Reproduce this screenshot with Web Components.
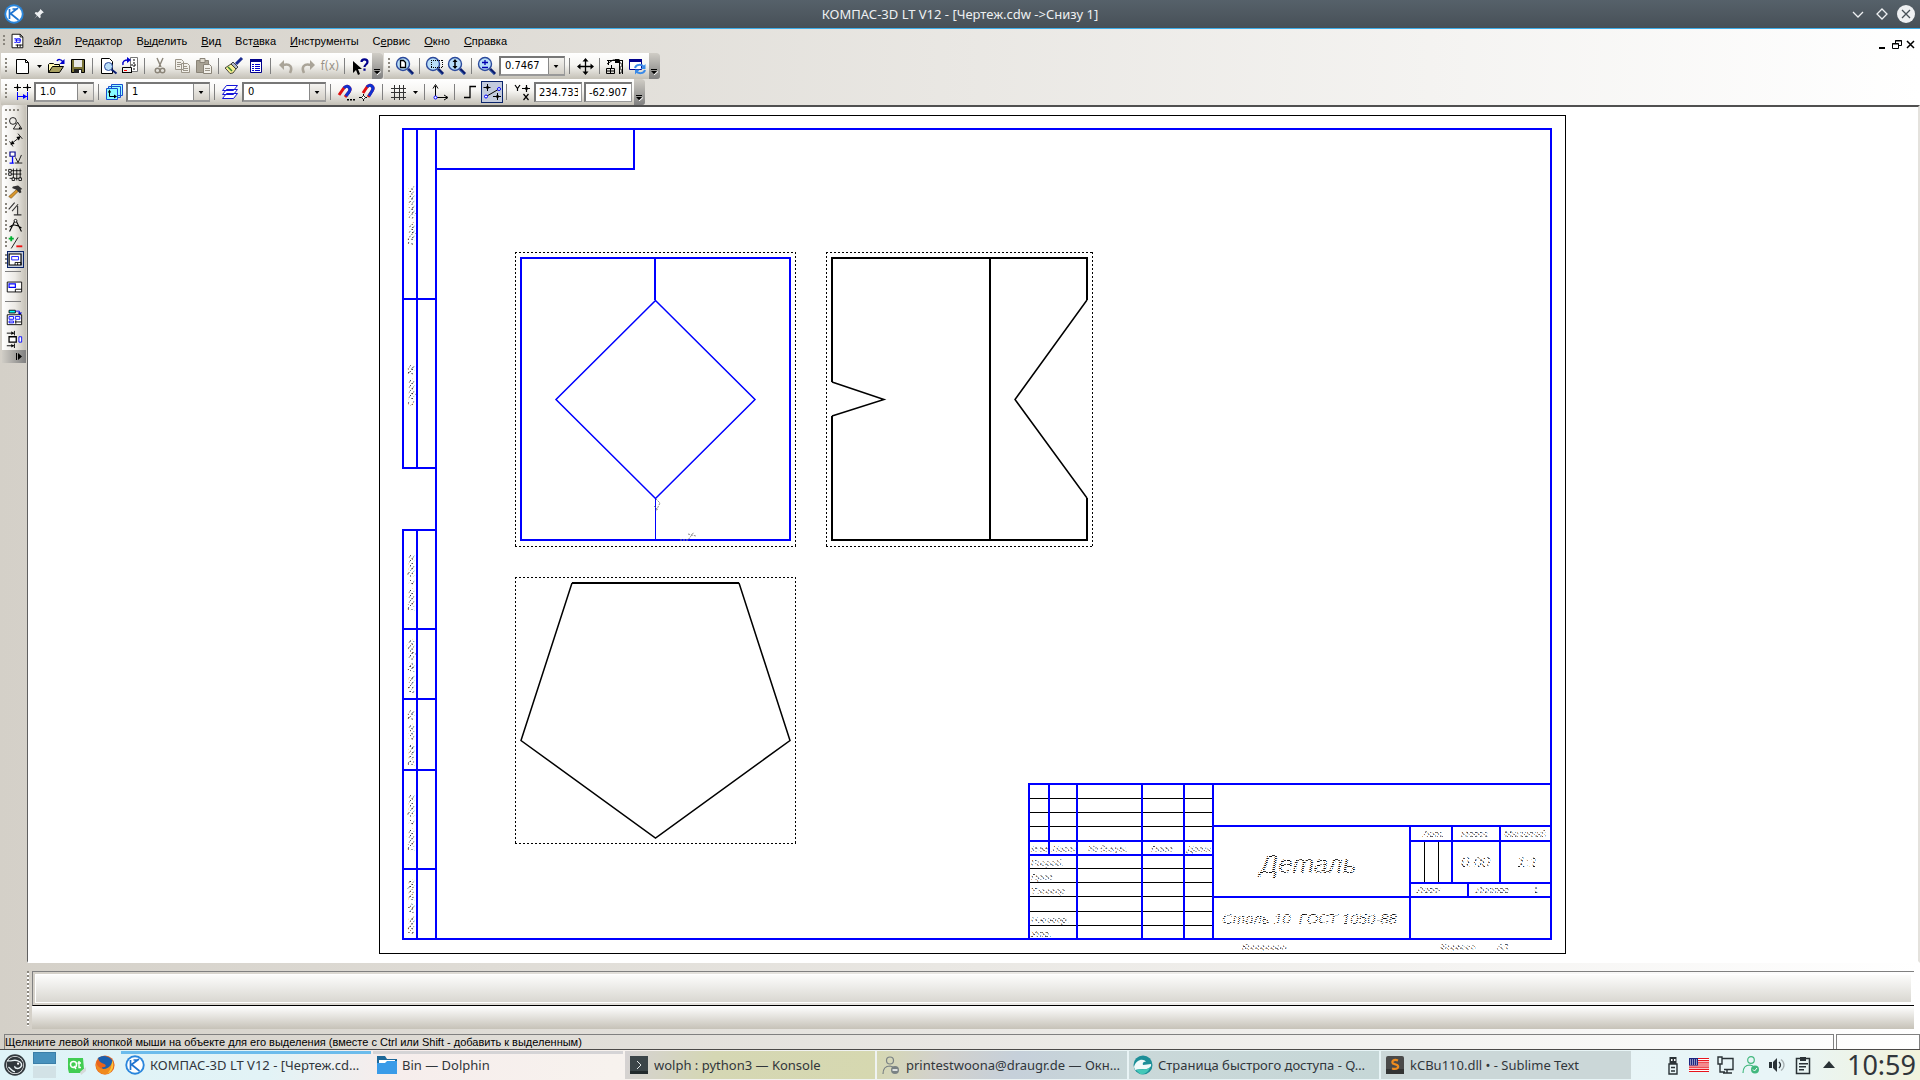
<!DOCTYPE html>
<html lang="ru">
<head>
<meta charset="utf-8">
<title>КОМПАС-3D LT V12</title>
<style>
html,body{height:100%;margin:0}
body{font:11px/14px "DejaVu Sans Condensed","DejaVu Sans",sans-serif;color:#000;overflow:hidden}
</style>
</head>
<body>
<kompas-desktop></kompas-desktop>
<script>
const lens = inner => `<circle cx="8" cy="8" r="6.5" fill="#b9def8" stroke="#2c4a9c" stroke-width="1.4"/><path d="M13 13l5 5" stroke="#0a1c70" stroke-width="3"/><path d="M12.6 14.2l4.4 4.4" stroke="#5a8ad0"/>${inner}`;
const kLogo = `<circle cx="10" cy="10" r="9.7" fill="#2a86dc"/><circle cx="10" cy="10" r="7.8" fill="#fff"/><path d="M5.5 5v10M6 10l8-6M6.500 9.500l8 6.500M8.500 5h4" stroke="#1f74d0" stroke-width="1.700" fill="none"/>`;
const ICONS = {
 logo: kLogo,
 pin: `<path d="M12 3l5 5-2 .5-3 3 .5 3-1.500 1.500-3.500-3.500L3 17l4-5L3.800 8.800l1.500-1.500 3 .5 3-3z" fill="#eef0f2"/>`,
 chev: `<path d="M5 8l5 5 5-5" fill="none" stroke="#eef0f2" stroke-width="1.3"/>`,
 diamond: `<path d="M10 5l5 5-5 5-5-5z" fill="none" stroke="#eef0f2" stroke-width="1.3"/>`,
 closeRound: `<circle cx="10" cy="10" r="9" fill="#eef0f2"/><path d="M6 6l8 8M14 6l-8 8" stroke="#475057" stroke-width="1.300"/>`,
 docwin: `<path d="M4.500 2.500h9l3 3v12h-12z" fill="#fff" stroke="#000"/><path d="M13.500 2.500v3h3" fill="none" stroke="#000"/><path d="M7 7.500h2M7 11.500h2M7.500 9h7M9.500 7.500h4v4h-4z" stroke="#00f" fill="none"/><path d="M8.500 14.500h8M10.500 14v3M13.500 14v3" stroke="#000"/>`,
 new: `<path d="M4.500 3.500h9l3 3v11h-12z" fill="#fff" stroke="#000"/><path d="M13.500 3.500v3h3" fill="none" stroke="#000"/>`,
 open: `<path d="M2.500 16.500V8.500l1-1h4l1 1h5v2" fill="#fff8b0" stroke="#000"/><path d="M2.500 16.500l4-6h11l-4 6z" fill="#a8a060" stroke="#000"/><path d="M11 5c1-2 4-2 6 1" fill="none" stroke="#00c" stroke-width="1.500"/><path d="M18.500 3v5h-5z" fill="#00c"/>`,
 save: `<path d="M3.500 3.500h13v13h-13z" fill="#7a7438" stroke="#000"/><path d="M6 4h8v7H6z" fill="#e8e8e8"/><path d="M6 13h8v4H6z" fill="#222"/><path d="M11 14h2v3h-2z" fill="#fff"/>`,
 preview: `<path d="M3.500 2.500h8l3 3v12h-11z" fill="#fff" stroke="#000"/><circle cx="10.500" cy="10.500" r="4" fill="#b9def8" stroke="#2c4a9c"/><path d="M13.500 13.500l5 4" stroke="#0a1c70" stroke-width="2"/>`,
 printview: `<path d="M10.500 1.500h7v14h-7z" fill="#fff" stroke="#777"/><path d="M14 3v12M11 9h6" stroke="#000" stroke-dasharray="2 1"/><path d="M2.500 11.500h9v5h-9z" fill="#eee" stroke="#000"/><path d="M2 16.500h10" stroke="#000"/><path d="M4 14.500h3" stroke="#f00"/><path d="M3 9c-1-4 2-5 5-5" fill="none" stroke="#00c" stroke-width="1.500"/><path d="M7 1l4 3-4 3z" fill="#00c"/>`,
 cut: `<path d="M7 2l4 9M13 2L9 11" stroke="#8a8478" stroke-width="1.400"/><circle cx="7.500" cy="14.500" r="2.300" fill="none" stroke="#8a8478" stroke-width="1.400"/><circle cx="12.500" cy="14.500" r="2.300" fill="none" stroke="#8a8478" stroke-width="1.400"/>`,
 copy: `<path d="M3.500 3.500h6l2 2v8h-8zM9.500 7.500h6l2 2v7h-8z" fill="#f2f0ea" stroke="#9a9488"/><path d="M5 6.500h4M5 8.500h4M5 10.500h3M11 10.500h4M11 12.500h5M11 14.500h5" stroke="#9a9488"/>`,
 paste: `<path d="M2.500 4.500h12v12h-12z" fill="#a8a294" stroke="#8a8478"/><path d="M6 2.500h5v4H6z" fill="#ddd8cc" stroke="#8a8478"/><path d="M9.500 8.500h6l2 2v7h-8z" fill="#f2f0ea" stroke="#8a8478"/><path d="M11 12.500h5M11 14.500h5" stroke="#9a9488"/>`,
 brush: `<path d="M18 2l-6 6" stroke="#1c2c90" stroke-width="3"/><path d="M9 6l5 5-2 2-5-5z" fill="#b0b8c8" stroke="#222" stroke-width=".8"/><path d="M7 8l5 5-3 4-3 .5L3 14 1 12z" fill="#f4ee90" stroke="#222" stroke-width=".8"/><path d="M4 11l4 4" stroke="#308030" stroke-width="1.500"/>`,
 props: `<path d="M4.500 3.500h11v13h-11z" fill="#fff" stroke="#00008b"/><path d="M4 3h12v3H4z" fill="#00008b"/><path d="M6 8.500h2M6 10.500h2M6 12.500h2M6 14.500h2M9 8.500h5M9 10.500h5M9 12.500h5M9 14.500h5" stroke="#00c"/>`,
 undo: `<path d="M8 4v10L3 9z" fill="#aaa498"/><path d="M7 9c7-2 10 2 7 8" fill="none" stroke="#aaa498" stroke-width="2.600"/>`,
 redo: `<path d="M12 4v10l5-5z" fill="#aaa498"/><path d="M13 9c-7-2-10 2-7 8" fill="none" stroke="#aaa498" stroke-width="2.600"/>`,
 help: `<path d="M3 5v12l3-3 2 5 2-1-2-5h4z" fill="#000"/><path d="M11.500 6c0-3.500 6-3.500 6 0 0 2.500-3 2.500-3 5" fill="none" stroke="#00008b" stroke-width="2.200"/><path d="M13.400 12.500h2.200v2.200h-2.200z" fill="#00008b"/>`,
 zdoc: lens(`<path d="M5.500 4.500h3l2 2v5h-5z" fill="#fff" stroke="#000" stroke-width="1.300"/>`),
 zreg: lens(`<path d="M6 4.500h12M6 11.500h12M6.500 4v8M17.500 4v8" stroke="#000" stroke-dasharray="1 1"/>`),
 zarr: lens(`<path d="M8 4v8" stroke="#000" stroke-width="1.500"/><path d="M5.500 6L8 3l2.500 3zM5.500 10L8 13l2.500-3z" fill="#000"/>`),
 zpm: lens(`<path d="M5 6.500h6M8 4v5M5 11.500h6" stroke="#0000b0" stroke-width="1.300"/>`),
 move: `<path d="M4 10.500h13M10.500 4v13" stroke="#000" stroke-width="1.300"/><path d="M10.500 2l-3 3.500h6zM10.500 19l-3-3.500h6zM2 10.500L5.500 7.500v6zM19 10.500l-3.500-3v6z" fill="#000"/>`,
 crane: `<path d="M2 4.500h16M3.500 5v4M14.500 5v13M17.500 5v13M2 8l6-4 7 0" stroke="#000" fill="none"/><path d="M14.500 6l3 3-3 3 3 3-3 3" stroke="#000" fill="none"/><path d="M10 3h4v4h-4z" fill="#000"/><path d="M1.500 12.500h8v5h-8zM1.500 15h8M5.500 12.500v5M6.500 9v3" stroke="#000" fill="none"/>`,
 refresh: `<path d="M2.500 3.500h12v10h-12z" fill="#fff" stroke="#00008b"/><path d="M2 3h13v3H2z" fill="#00008b"/><path d="M8 12c1-4 7-4 9-1M18 14c-1 4-7 4-9 1" fill="none" stroke="#3a8ae8" stroke-width="2"/><path d="M18.500 8v5h-5zM8 18.500v-5h5z" fill="#3a8ae8"/>`,
 dimwidth: `<path d="M2 5.500h7M11 5.500h8M5.500 2v7M15.500 2v7" stroke="#000"/><path d="M4 5.500l1.500-2 1.500 2-1.500 2zM14 5.500l1.500-2 1.500 2-1.500 2z" fill="#000"/><path d="M5.500 10v8M15.500 10v8M6 14.500h9" stroke="#00f"/><path d="M15 14.500l-4-2.500v5z" fill="#00f"/>`,
 layers1: `<path d="M7.500 2.500h11v11h-11zM4.500 4.500h12v11h-12z" fill="#9ff" stroke="#1a50d0"/><path d="M2.500 6.500h11v11h-11z" fill="#8ff" stroke="#1a50d0"/><path d="M5.500 9v5.500h6" fill="none" stroke="#000"/><path d="M3.800 10.500l1.700-3 1.700 3zM10 12.500l3 2-3 2z" fill="#000"/>`,
 layers2: `<path d="M2.500 16.500l4-5h11l-4 5zM2.500 12.500l4-5h11l-4 5zM2.500 8.500l4-5h11l-4 5z" fill="#fff" stroke="#1414d8"/>`,
 magnet1: `<path d="M3 13l5-7c3-4 8 0 5 4l-4 5" fill="none" stroke="#e01010" stroke-width="3"/><path d="M8 6c3-4 8 0 5 4l-3 4" fill="none" stroke="#1030d0" stroke-width="3"/><path d="M11 17h2v1.500h-2zM14 17h2v1.500h-2zM17 17h2v1.500h-2z" fill="#000"/>`,
 magnet2: `<path d="M5 11l4-6c3-4 8 0 5 4l-4 6" fill="none" stroke="#e01010" stroke-width="3"/><path d="M9 5c3-4 8 0 5 4l-3 5" fill="none" stroke="#1030d0" stroke-width="3"/><path d="M1 15.500h8M5.500 12v7" stroke="#000"/><path d="M3.500 15.500l2-2 2 2-2 2z" fill="#fff" stroke="#000" stroke-width=".8"/>`,
 grid: `<path d="M3 6.500h15M3 10.500h15M3 15.500h15M6.500 3v15M11.500 3v15M15.500 3v15" stroke="#333"/>`,
 axes: `<path d="M5.500 4v10M7 15.500h10" stroke="#000"/><path d="M3 6.500l2.500-4 2.500 4M14 13l4 2.500-4 2.500" fill="none" stroke="#000"/><circle cx="5.500" cy="15.500" r="1.500" fill="#fff" stroke="#00f"/>`,
 step: `<path d="M4 15.500h6v-11h6" fill="none" stroke="#000" stroke-width="1.300"/>`,
 roundsnap: `<path d="M5 14L17 7" stroke="#000"/><path d="M1.500 5.500h7M5.500 2v7M11 14.500h8M15.500 11v7" stroke="#000"/><path d="M3.500 5.500l2-2 2 2-2 2zM13.500 14.500l2-2 2 2-2 2z" fill="#000"/><circle cx="4" cy="14.500" r="1.500" fill="#fff" stroke="#00f"/><circle cx="17" cy="7" r="1.500" fill="#fff" stroke="#00f"/>`,
 yx: `<path d="M3 3l2.500 3.500L8 3M5.500 6v3M10 6.500h8M14.500 3v7M11.500 12l5 6M16.500 12l-5 6" fill="none" stroke="#000" stroke-width="1.200"/><path d="M12.500 6.500l2-2 2 2-2 2z" fill="#000"/>`,
 geom: `<circle cx="7" cy="7" r="4" fill="none" stroke="#000"/><path d="M12.500 8.500l5 8h-10z" fill="none" stroke="#000"/><circle cx="15" cy="15.500" r="1" fill="#000"/>`,
 dims: `<path d="M3 11l4 6M13 2l5 6M5 14l10-8" stroke="#000"/><path d="M4 15l2-5 3 4zM16 5l-2 5-3-4z" fill="#000"/>`,
 notes: `<path d="M3.500 3.500h6v5h-6z" fill="#fff" stroke="#00008b" stroke-width="1.400"/><path d="M6.500 9v7M3 16.500h5" stroke="#00f" stroke-width="1.500"/><path d="M9 16.500h9M10 10l3 6 4-9" fill="none" stroke="#000"/>`,
 edit: `<path d="M3 5.500h14M3 9.500h14M3 14.500h14M7.500 3v14M11.500 3v14M15.500 3v14" stroke="#000"/><path d="M2 8h3v3H2zM2 4h3v3H2zM6 14h3v3H6zM14 14h3v3h-3z" fill="#fff" stroke="#000"/>`,
 hammer: `<path d="M2 16L12 7l2 2L5 18z" fill="#d8962c" stroke="#5a3800" stroke-width=".6"/><path d="M7 4l6-1 5 4-2 1 1 3-2 1-4-4-5-2z" fill="#333"/>`,
 param: `<path d="M2 11l7-8M6 13l7-8M8 17.500h9M12.500 7v10" stroke="#333" stroke-width="1.300"/>`,
 measure: `<path d="M9.500 4L3 17M10.500 4L17 17M3 12c4-4 9-3 14 1" fill="none" stroke="#000" stroke-width="1.300"/><circle cx="10" cy="4.500" r="1.700" fill="#fff" stroke="#000"/>`,
 select: `<path d="M2 5.500h6M5 2.500v6" stroke="#00b030" stroke-width="2.200"/><path d="M5 17l8-13" stroke="#000"/><path d="M11 14.500h7" stroke="#f01010" stroke-width="2.200"/>`,
 views: `<path d="M2.500 3.500h14v13h-14z" fill="#fff" stroke="#000" stroke-width="1.400"/><path d="M5.500 6.500h8v4h-8z" fill="#fff" stroke="#00f"/><path d="M9.500 13.500h7v3M12.500 13.500v3M9.500 13.500v3" stroke="#000" fill="none"/>`,
 sheet: `<path d="M2.500 4.500h16v11h-16z" fill="#fff" stroke="#000"/><path d="M4.500 6.500h7v4h-7z" fill="#fff" stroke="#00f" stroke-width="1.300"/><path d="M11.500 15.500v-3h7" stroke="#000" fill="none"/>`,
 stdviews: `<path d="M4.500 2.500h7v3h-7z" fill="#0ff" stroke="#000"/><path d="M12 3.500h4v3" fill="none" stroke="#00f"/><path d="M14 5h5l-2.500 3z" fill="#00c"/><path d="M2.500 7.500h16v11h-16z" fill="#fff" stroke="#000"/><path d="M4.500 9.500h5v3h-5zM11.500 9.500h5v3h-5zM4.500 14.500h5v2h-5z" fill="none" stroke="#00f"/><path d="M11 15.500h7M12 13.500v4" stroke="#000"/>`,
 breakview: `<path d="M4.500 7.500h8v6h-8z" fill="#fff" stroke="#000" stroke-width="1.400"/><path d="M15.500 7.500h3v6h-3z" fill="#fff" stroke="#00f"/><path d="M2 3.500h8M2 17.500h8M10.500 1v5M10.500 15v5" stroke="#000"/><path d="M10 3.500L7 1.500v4zM10 17.500l-3-2v4z" fill="#000"/>`,
 suse: `<circle cx="10" cy="10" r="9" fill="#fff" stroke="#333a3e" stroke-width="1.600"/><circle cx="10" cy="10" r="7.600" fill="#30373b"/><path d="M3 6c4 1 5-1 9 0 4 1 5 4 3 6-2 2-6 1-5-1M4 12c2 1 3 4 6 4" fill="none" stroke="#e8f2f4" stroke-width="1.300"/><circle cx="12.800" cy="8.800" r="1" fill="#fff"/>`,
 qt: `<path d="M2 3h15l1 11-3 4H3l-1-4z" fill="#41cd52"/><circle cx="7.500" cy="9.500" r="3" fill="none" stroke="#fff" stroke-width="1.500"/><path d="M8 11l2 3M13 6v6.500h2M11.500 8h3.500" stroke="#fff" stroke-width="1.400" fill="none"/><path d="M14 17l6-5v4l-5 4z" fill="#d6dadb"/>`,
 firefox: `<circle cx="10" cy="10" r="9.600" fill="#e8641c"/><path d="M3 3c2-2 9-4 14 2 2 4 1 8-2 10-5 2-8-1-8-3 4 1 5-2 2-3-2-1-5-2-6-6z" fill="#1b5fae"/><path d="M1 6c0 4 3 7 7 8 4 0 7-2 9-6 2 6-2 11-7 11.500C4 19 0 14 1 6z" fill="#f08a1e"/><path d="M17 5c3 5 1 12-5 14 4-4 5-9 5-14z" fill="#fbc53a"/>`,
 folder: `<path d="M0 1h8l2 3h10v15H0z" fill="#1d6798"/><path d="M2 5h16v4H2z" fill="#fff"/><path d="M0 8h8l2-2h10v13H0z" fill="#3a9be8"/>`,
 konsole: `<path d="M1 1h18v18H1z" fill="#3b4548"/><path d="M1 16h18v3H1z" fill="#222a2c"/><path d="M8 6l4 4-4 4" stroke="#dfe5e5" fill="none"/>`,
 userx: `<circle cx="9" cy="5.500" r="3.500" fill="none" stroke="#7a8284" stroke-width="1.200"/><path d="M2 19c0-6 3-8 7-8l3 1" fill="none" stroke="#7a8284" stroke-width="1.200"/><circle cx="14" cy="15" r="4" fill="#7a8284"/><path d="M11.500 15h5" stroke="#fff" stroke-width="1.500"/>`,
 sea: `<circle cx="10" cy="10" r="9.500" fill="#1d8f98"/><path d="M1 12c2-8 10-9 12-5-2-1-4 1-3 3l8-1c1 3-3 6-8 5-4 0-7 1-8 1z" fill="#f2fafa"/><path d="M3 15c5-2 10 1 14-3-1 5-6 8-10 7z" fill="#44c8b8"/>`,
 sublime: `<rect x="1" y="1" width="18" height="18" rx="2" fill="#4a4a4a"/><path d="M1 14h18v5H1z" fill="#343434"/><path d="M13 5.500C9 4 6 6 8 8.500l4 1.500c3 2 0 5-5 3.500" fill="none" stroke="#f08c1e" stroke-width="2.200"/>`,
 usb: `<path d="M6 9h8v10H6z" fill="none" stroke="#2a3236" stroke-width="1.400"/><path d="M6.500 2h7v7h-7z" fill="#2a3236"/><path d="M8 4h1.500v2H8zM11 4h1.500v2H11z" fill="#fff"/><path d="M8 12.500h4M8 16h4" stroke="#2a3236" stroke-width="1.500"/>`,
 flag: `<path d="M0 3h20v14H0z" fill="#fff"/><path d="M0 3.500h20M0 5.600h20M0 7.800h20M0 10h20M0 12.200h20M0 14.400h20M0 16.500h20" stroke="#e8141c" stroke-width="1.200"/><path d="M0 3h9v7.500H0z" fill="#1c2480"/><path d="M1 5h8M1 7h8M1 9h8" stroke="#fff" stroke-dasharray="1 1"/>`,
 screen: `<path d="M7 3.500h11v11H9" fill="none" stroke="#2a3236" stroke-width="1.400"/><path d="M3 2h4v7H3zM5 9v8h5M12 15v3M8 18h9" fill="none" stroke="#2a3236" stroke-width="1.400"/>`,
 userok: `<circle cx="10" cy="5" r="3.300" fill="none" stroke="#42b87e" stroke-width="1.200"/><path d="M2 18c0-6 3-8 7-8l3 1" fill="none" stroke="#42b87e" stroke-width="1.200"/><circle cx="14" cy="14.500" r="4" fill="#42b87e"/><path d="M12 14.500l1.500 1.500 2.500-3" stroke="#fff" fill="none"/>`,
 volume: `<path d="M2 7h3v6H2zM6 7l4-4v14l-4-4z" fill="#2a3236"/><path d="M12 7c2 2 2 4 0 6" stroke="#2a3236" fill="none" stroke-width="1.300"/><path d="M14 4.500c4 3 4 8 0 11" stroke="#a9b2b4" fill="none" stroke-width="1.300"/>`,
 clip: `<path d="M3.500 3.500h13v15h-13z" fill="none" stroke="#2a3236" stroke-width="1.500"/><path d="M7 2h6v4H7zM6 8h9v1.600H6zM6 11h7v1.600H6zM6 14h5v1.500H6z" fill="#2a3236"/>`,
 up: `<path d="M4 13l6-7 6 7z" fill="#2a3236"/>`
};

function define(name, html, setup) {
  const tpl = document.createElement('template');
  tpl.innerHTML = `<style>*{box-sizing:border-box}button,input,select{font:inherit;color:inherit;margin:0;border:0;border-radius:0;background:none;padding:0;outline:0}</style>` + html;
  customElements.define(name, class extends HTMLElement {
    constructor() { super(); this.attachShadow({mode:'open'}); }
    connectedCallback() {
      if (this.shadowRoot.childNodes.length) return;
      this.shadowRoot.append(tpl.content.cloneNode(true));
      if (setup) setup(this, this.shadowRoot);
    }
  });
}

define('k-icon', `<style>:host{display:block;flex:none;width:var(--size,20px);height:var(--size,20px)}svg{display:block;width:100%;height:100%}</style><svg viewBox="0 0 20 20" aria-hidden="true"></svg>`,
  (el, root) => { root.querySelector('svg').innerHTML = ICONS[el.getAttribute('name')] || ''; });

define('tool-button', `<style>
:host{display:flex;flex:none;width:22px;height:22px}
button{width:100%;height:100%;display:flex;align-items:center;justify-content:center}
:host([pressed]) button{background:#c3cbdd;border:1px solid #0a246a}
:host([disabled]) button{color:#989286}
</style><button type="button"><slot></slot></button>`, (el, root) => {
  const b = root.querySelector('button');
  b.setAttribute('aria-label', el.getAttribute('label') || el.getAttribute('icon'));
  if (el.hasAttribute('icon')) b.innerHTML = `<k-icon name="${el.getAttribute('icon')}"></k-icon>`;
});

define('drop-button', `<style>:host{display:flex;flex:none;width:12px;height:22px}button{width:100%;display:grid;place-items:center}</style>
<button type="button" aria-label="Список"><svg width="5" height="3"><path d="M0 0h5L2.500 3z"/></svg></button>`);

define('tool-sep', `<style>:host{display:block;flex:none;width:8px;height:16px;padding:0 3px}i{display:block;width:1px;height:100%;background:#808080}
:host([flat]){width:16px;height:8px;padding:3px 0}:host([flat]) i{width:100%;height:1px}</style><i></i>`);

define('tool-grip', `<style>:host{display:block;flex:none;width:10px;height:16px;padding-left:4px}
i{display:block;width:2px;height:100%;background:repeating-linear-gradient(#8a867e 0 2px,transparent 2px 4px)}
:host([small]){width:5px;height:12px;padding-left:3px}
:host([flat]){width:16px;height:10px;padding:4px 0 0}:host([flat]) i{width:100%;height:2px;background:repeating-linear-gradient(90deg,#8a867e 0 2px,transparent 2px 4px)}</style><i></i>`);

define('tool-bar', `<style>
:host{display:flex;height:26px;border-radius:0 3px 3px 0;overflow:hidden;background:linear-gradient(#fff 0%,#f6f5f2 45%,#c4c0b6 100%)}
.items{display:flex;align-items:center;padding-right:1px}
.cap{width:11px;display:flex;align-items:flex-end;justify-content:center;padding-bottom:4px;background:linear-gradient(#d0cdc6,#808080)}
</style><div class="items"><slot></slot></div><button class="cap" type="button" aria-label="Параметры панели"><svg width="7" height="6"><path d="M0 0h6v1H0zM0 2h6L3 5z"/><path d="M3 6l4-3.500" stroke="#fff"/></svg></button>`);

define('combo-box', `<style>
:host{display:block;flex:none;width:var(--w,84px);margin:0 1px;height:20px}
div{display:flex;height:100%;border:2px solid #808080;border-right-width:1px;border-color:#777 #999 #999 #777;background:#fff;position:relative}
select{appearance:none;flex:1;width:100%;padding:0 18px 0 4px;font-size:11px;line-height:14px;text-overflow:clip}
svg{position:absolute;right:0;top:0;width:16px;height:100%;background:linear-gradient(#f4f3f0,#d4d0c8);border-left:1px solid #888;pointer-events:none}
</style><div><select></select><svg viewBox="0 0 16 16"><path d="M5 7h5L7.500 10z"/></svg></div>`, (el, root) => {
  const s = root.querySelector('select');
  s.setAttribute('aria-label', el.getAttribute('label'));
  s.add(new Option(el.getAttribute('value')));
});

define('coord-field', `<style>:host{display:block;flex:none;width:48px;height:20px;margin:0 1px}
input{width:100%;height:100%;background:#fff;border:2px solid #777;border-right:1px solid #999;border-bottom:1px solid #999;padding:0 3px;font-size:11px}</style><input type="text">`, (el, root) => {
  const i = root.querySelector('input'); i.value = el.getAttribute('value'); i.setAttribute('aria-label', el.getAttribute('label'));
});

define('title-bar', `<style>
:host{display:grid;grid-template-columns:1fr auto 1fr;align-items:center;height:29px;padding:0 4px 1px 4px;background:linear-gradient(#56616a,#475057);border-bottom:1px solid #3daee9;color:#eef0f2;font:13px/18px "Noto Sans",sans-serif}
div{display:flex;align-items:center;gap:4px}.r{justify-content:flex-end;gap:4px}
h1{font:inherit;margin:0}button{display:block}k-icon.pin{--size:14px;margin-left:4px}
</style><div><k-icon name="logo"></k-icon><k-icon class="pin" name="pin"></k-icon></div>
<h1>КОМПАС-3D LT V12 - [Чертеж.cdw -&gt;Снизу 1]</h1>
<div class="r"><button aria-label="Свернуть"><k-icon name="chev"></k-icon></button><button aria-label="Развернуть"><k-icon name="diamond"></k-icon></button><button aria-label="Закрыть"><k-icon name="closeRound"></k-icon></button></div>`);

define('menu-bar', `<style>
:host{display:flex;align-items:center;height:24px}
k-icon{--size:18px}nav{display:flex;flex:1;padding-left:1px;font-family:"Liberation Sans",sans-serif}nav button{padding:0 7px;height:20px}
.w{display:flex;align-self:flex-end;padding:0 3px 3px 0;gap:2px}.w svg{display:block}.w button{width:12px;height:12px}
</style><tool-grip small></tool-grip><k-icon name="docwin" style="margin-left:3px"></k-icon>
<nav><button><u>Ф</u>айл</button><button><u>Р</u>едактор</button><button>В<u>ы</u>делить</button><button><u>В</u>ид</button><button>Вст<u>а</u>вка</button><button><u>И</u>нструменты</button><button>С<u>е</u>рвис</button><button><u>О</u>кно</button><button><u>С</u>правка</button></nav>
<div class="w"><button aria-label="Свернуть окно"><svg width="12" height="12"><path d="M2 9h6v2H2z"/></svg></button><button aria-label="Восстановить окно"><svg width="12" height="12" fill="none" stroke="#000"><path d="M4.500 5V2.500h6v5H8M1.500 5.500h6v5h-6zM4 3h7M1 6h7"/></svg></button><button aria-label="Закрыть окно"><svg width="12" height="12"><path d="M2 3l7 7M9 3l-7 7" stroke="#000" stroke-width="1.500"/></svg></button></div>`);

define('side-bar', `<style>
:host{display:block;width:27px;padding-left:2px}
.bar{width:24px;background:linear-gradient(90deg,#fff,#eceae5 55%,#c4c0b6);border-radius:3px 3px 0 0;display:flex;flex-direction:column}
.top{padding-left:3px;height:10px}
.row{display:flex;align-items:center;height:17px}.row tool-button{width:17px;height:17px;--size:17px}
.big{align-self:center;--size:18px}.s{margin-left:3px}
.cap{height:13px;background:linear-gradient(90deg,#d0cdc6,#808080);display:flex;justify-content:flex-end;align-items:center;padding-right:3px}
</style><div class="bar"><div class="top"><tool-grip flat></tool-grip></div><div id="rows"></div>
<tool-sep flat class="s"></tool-sep><tool-button class="big" icon="sheet" label="Новый вид"></tool-button><tool-sep flat class="s"></tool-sep><tool-button class="big" icon="stdviews" label="Стандартные виды"></tool-button><tool-button class="big" icon="breakview" label="Разрыв вида"></tool-button>
<button class="cap" aria-label="Развернуть панель"><svg width="7" height="7"><path d="M0 0h1v7H0zM2 0l4 3.500L2 7z"/></svg></button></div>`, (el, root) => {
  const names = ['geom','dims','notes','edit','hammer','param','measure','select','views'];
  const tips = ['Геометрия','Размеры','Обозначения','Редактирование','Правка','Параметризация','Измерения','Выделение','Виды'];
  root.getElementById('rows').innerHTML = names.map((n,i)=>`<div class="row"><tool-grip small></tool-grip><tool-button icon="${n}" label="${tips[i]}" ${n==='views'?'pressed':''}></tool-button></div>`).join('');
});

define('drawing-sheet', `<style>
:host{display:block;background:#fff;border:solid;border-width:2px 2px 2px 1px;border-color:#505050 #e4e2dd #fff #606060;overflow:hidden;min-width:0}
svg{display:block;width:100%;height:100%}
path,rect{fill:none}
.b{stroke:#00f;stroke-width:2}.k{stroke:#000;stroke-width:1}.v{stroke:#000;stroke-width:2}.d{stroke:#000;stroke-dasharray:2 2}
text{font-family:"Liberation Sans Narrow","Liberation Sans",sans-serif;font-style:italic;font-size:9px;fill:url(#raster)}
.m{font-size:15px}.l{font-size:15px;fill:url(#hatch)}.x{font-size:26px;fill:url(#hatch)}
</style><svg viewBox="28 107 1890 854" preserveAspectRatio="xMidYMid meet" role="img" aria-label="Чертеж">
<defs><pattern id="raster" width="5" height="4" patternUnits="userSpaceOnUse"><g shape-rendering="crispEdges"><path style="fill:#222" d="M0 0h3v1H0zM3 2h2v1H3z"/><path style="fill:#777" d="M2 1h2v1H2zM0 3h2v1H0z"/></g></pattern>
<pattern id="hatch" width="9" height="4" patternUnits="userSpaceOnUse"><g shape-rendering="crispEdges"><path style="fill:#111" d="M0 0h3v1H0zM3 1h3v1H3zM6 2h3v1H6z"/><path style="fill:#333" d="M0 2h2v1H0zM3 3h3v1H3zM6 0h2v1H6z"/></g></pattern></defs>
<g shape-rendering="crispEdges">
<rect class="k" x="379.500" y="115.500" width="1186" height="838"/>
<path class="b" d="M402 129H1552M1551 129V940M402 939H1552M436 129V939M403 129V468M417 129V468M402 468H436M403 299H436M403 530V939M417 530V939M402 530H436M403 629H436M403 699H436M403 770H436M403 869H436M436 169H635M634 129V169"/>
<path class="k" d="M1029 798.500H1213M1029 812.500H1213M1029 826.500H1213M1029 868.500H1213M1029 882.500H1213M1029 896.500H1213M1029 911.500H1213M1029 925.500H1213M1424.500 841V883M1438.500 841V883"/>
<path class="b" d="M1028 784H1551M1029 784V939M1049 784V855M1077 784V939M1142 784V939M1184 784V939M1213 784V939M1029 841H1213M1029 855H1213M1213 826H1551M1213 897H1551M1410 826V939M1410 841H1551M1410 883H1551M1452 826V883M1500 826V883M1468 883V897"/>
<path class="d" d="M515 252.500H796M515 546.500H796M515.500 252V547M795.500 252V547M826 252.500H1093M826 546.500H1093M826.500 252V547M1092.500 252V547M515 577.500H796M515 843.500H796M515.500 577V844M795.500 577V844"/>
<path class="b" d="M521 258H790V540H521ZM655 258V300"/>
<path class="b" style="stroke-width:1" d="M655.500 498V540"/>
<path class="v" d="M832 382V258H1087V300M1087 498V540H832V416M990 258V540"/>
</g>
<path class="b" style="stroke-width:1.500" d="M655.500 300.500L556 399.500L655.500 498.500L755 399.500Z"/>
<path class="v" style="stroke-width:1.500" d="M832 382L884 399.500L832 416M1087 300L1015 399.500L1087 498M572 583L521 740.500L655.500 838L790 740.500L739 583"/>
<path class="v" d="M572 583H739"/>
<path stroke="#888" stroke-dasharray="2 1" d="M656 499l4 4-4 8M654 506l4 4M680 540h8l6-8M688 534l8 2"/>
<text transform="rotate(-90)" x="-245" y="414">Перв. примен.</text><text transform="rotate(-90)" x="-406" y="414">Справ. №</text><text transform="rotate(-90)" x="-611" y="414">Подп. и дата</text><text transform="rotate(-90)" x="-693" y="414">Инв. № дубл.</text><text transform="rotate(-90)" x="-766" y="414">Взам. инв. №</text><text transform="rotate(-90)" x="-851" y="414">Подп. и дата</text><text transform="rotate(-90)" x="-934" y="414">Инв. № подл.</text>
<text x="1031" y="852">Изм</text><text x="1052" y="852">Лист</text><text x="1088" y="852">№ докум.</text><text x="1151" y="852">Подп.</text><text x="1187" y="852">Дата</text>
<text x="1031" y="866">Разраб.</text><text x="1031" y="880">Пров.</text><text x="1031" y="894">Т.контр.</text><text x="1031" y="923">Н.контр.</text><text x="1031" y="937">Утв.</text>
<text class="x" x="1260" y="873">Деталь</text><text class="l" x="1222" y="924" xml:space="preserve">Сталь 10  ГОСТ 1050-88</text>
<text x="1423" y="837">Лит.</text><text x="1461" y="837">Масса</text><text x="1504" y="837">Масштаб</text><text class="m" x="1461" y="867">0.00</text><text class="m" x="1517" y="867">1:1</text>
<text x="1417" y="893">Лист</text><text x="1476" y="893">Листов</text><text x="1533" y="893">1</text><text x="1242" y="950">Копировал</text><text x="1440" y="950">Формат</text><text x="1497" y="950">А3</text>
</svg>`);

define('property-panel', `<style>
:host{display:flex;height:69px;padding:8px 6px 3px 27px;gap:3px}
.g{width:2px;height:55px;background:repeating-linear-gradient(#8a867e 0 2px,#fff 2px 4px)}
.p{flex:1}.a{height:35px;border:solid;border-width:1px 0 1px 1px;border-color:#808080 #fff #000 #808080;padding:2px}
.a div{height:100%;background:linear-gradient(#fcfcfb,#d9d7d1);border:1px solid #fff}
.b{height:23px;background:linear-gradient(#fff,#c6c2b8)}
</style><div class="g"></div><div class="p"><div class="a"><div></div></div><div class="b"></div></div>`);

define('status-bar', `<style>:host{display:flex;gap:2px;height:18px;padding:2px 0 0 4px;border-bottom:1px solid #4c4a48;font-family:"Liberation Sans",sans-serif}
div{border:1px solid #808080;border-width:1px 1px 0;line-height:15px;white-space:nowrap;overflow:hidden}.m{flex:1}.s{width:84px}
</style><div class="m" role="status">Щелкните левой кнопкой мыши на объекте для его выделения (вместе с Ctrl или Shift - добавить к выделенным)</div><div class="s"></div>`);

define('task-item', `<style>
:host{display:block;width:250px;flex:0 1 250px;min-width:0;height:28px}
button{width:100%;height:100%;display:flex;align-items:center;gap:5px;padding:0 4px;box-shadow:inset 0 3px var(--top,transparent);background:var(--bg,transparent);text-align:left}
span{flex:1;min-width:0;overflow:hidden;text-overflow:ellipsis;white-space:nowrap}
</style><button type="button"><k-icon></k-icon><span><slot></slot></span></button>`, (el, root) => {
  const old = root.querySelector('k-icon'), n = document.createElement('k-icon');
  n.setAttribute('name', el.getAttribute('icon')); old.replaceWith(n);
});

define('task-bar', `<style>
:host{display:flex;height:30px;padding-top:1px;background:linear-gradient(90deg,#dff4f8 0,#e2f3f6 14%,#f6edec 20%,#f7f2ee 32%,#e8f4f6 60%,#e8f5f7 93%,#f2f3dc);color:#31363b;font:13px/20px "Noto Sans",sans-serif}
.launch{display:flex;align-items:center;padding-left:4px;width:121px;gap:9px;height:28px}
.launch button{display:block}.pager{display:grid;grid-template-rows:12px 12px;gap:2px;margin:0 -2px;width:23px}.pager i{background:#d2e2e6}.pager i:first-child{background:#4892bd;border:1px solid #3b7fa8}
.tasks{display:flex;gap:2px;flex:1;min-width:0}
.tray{display:flex;align-items:center;gap:6px;height:28px}.tray button{display:block}
time{font-size:27px;line-height:28px;margin:0 4px 0 2px}
</style><div class="launch"><button aria-label="Меню"><k-icon name="suse" style="--size:22px"></k-icon></button><div class="pager"><i></i><i></i></div><button aria-label="Qt" style="margin-left:3px"><k-icon name="qt"></k-icon></button><button aria-label="Firefox"><k-icon name="firefox"></k-icon></button></div>
<div class="tasks">
<task-item icon="logo" style="--top:#6cbcec">КОМПАС-3D LT V12 - [Чертеж.cd…</task-item>
<task-item icon="folder" style="--top:#d5d4d6">Bin — Dolphin</task-item>
<task-item icon="konsole" style="--bg:linear-gradient(105deg,#d5d2d3,#d5d7b4 35%,#d6d8b0)">wolph : python3 — Konsole</task-item>
<task-item icon="userx" style="--bg:linear-gradient(105deg,#d6d8b2,#d2d1cc 25%,#c6d0da 55%,#c8d7d8)">printestwoona@draugr.de — Окн…</task-item>
<task-item icon="sea" style="--bg:linear-gradient(90deg,#cad8d9,#c6d7d7)">Страница быстрого доступа - Q…</task-item>
<task-item icon="sublime" style="--bg:#cbd7d8">kCBu110.dll • - Sublime Text</task-item>
</div><div class="tray"><button aria-label="USB"><k-icon name="usb"></k-icon></button><button aria-label="Раскладка"><k-icon name="flag"></k-icon></button><button aria-label="Экран"><k-icon name="screen"></k-icon></button><button aria-label="Контакты"><k-icon name="userok"></k-icon></button><button aria-label="Громкость"><k-icon name="volume"></k-icon></button><button aria-label="Буфер обмена"><k-icon name="clip"></k-icon></button><button aria-label="Показать"><k-icon name="up"></k-icon></button><time>10:59</time></div>`);

define('kompas-desktop', `<style>
:host{display:flex;flex-direction:column;height:100vh}
main{flex:1;min-height:0;display:flex;flex-direction:column;background:linear-gradient(90deg,#d4d0c8,#fff)}
.tools{display:flex;gap:1px;padding-left:1px}
.work{flex:1;min-height:0;display:grid;grid-template-columns:27px minmax(0,1fr)}
.fx{font-size:12px}
</style><title-bar></title-bar><main><menu-bar></menu-bar>
<div class="tools"><tool-bar><tool-grip></tool-grip><tool-button icon="new"></tool-button><drop-button></drop-button><tool-button icon="open"></tool-button><tool-button icon="save"></tool-button><tool-sep></tool-sep><tool-button icon="preview"></tool-button><tool-button icon="printview"></tool-button><tool-sep></tool-sep><tool-button icon="cut"></tool-button><tool-button icon="copy"></tool-button><tool-button icon="paste"></tool-button><tool-sep></tool-sep><tool-button icon="brush"></tool-button><tool-button icon="props"></tool-button><tool-sep></tool-sep><tool-button icon="undo"></tool-button><tool-button icon="redo"></tool-button><tool-button class="fx" label="Переменные" disabled>f(x)</tool-button><tool-sep></tool-sep><tool-button icon="help"></tool-button></tool-bar>
<tool-bar><tool-grip></tool-grip><tool-button icon="zdoc"></tool-button><tool-sep></tool-sep><tool-button icon="zreg"></tool-button><tool-button icon="zarr"></tool-button><tool-sep></tool-sep><tool-button icon="zpm"></tool-button><combo-box label="Масштаб" value="0.7467" style="--w:66px"></combo-box><tool-sep></tool-sep><tool-button icon="move"></tool-button><tool-sep></tool-sep><tool-button icon="crane"></tool-button><tool-button icon="refresh"></tool-button></tool-bar></div>
<div class="tools"><tool-bar><tool-grip></tool-grip><tool-button icon="dimwidth"></tool-button><combo-box label="Шаг курсора" value="1.0" style="--w:60px"></combo-box><tool-sep></tool-sep><tool-button icon="layers1"></tool-button><combo-box label="Вид" value="1"></combo-box><tool-sep></tool-sep><tool-button icon="layers2"></tool-button><combo-box label="Слой" value="0"></combo-box><tool-sep></tool-sep><tool-button icon="magnet1"></tool-button><tool-button icon="magnet2"></tool-button><tool-sep></tool-sep><tool-button icon="grid"></tool-button><drop-button></drop-button><tool-sep></tool-sep><tool-button icon="axes"></tool-button><tool-sep></tool-sep><tool-button icon="step"></tool-button><tool-button icon="roundsnap" pressed></tool-button><tool-sep></tool-sep><tool-button icon="yx"></tool-button><coord-field label="X" value="234.733"></coord-field><coord-field label="Y" value="-62.907"></coord-field></tool-bar></div>
<div class="work"><side-bar></side-bar><drawing-sheet></drawing-sheet></div>
<property-panel></property-panel><status-bar></status-bar></main><task-bar></task-bar>`);
</script>
</body>
</html>
